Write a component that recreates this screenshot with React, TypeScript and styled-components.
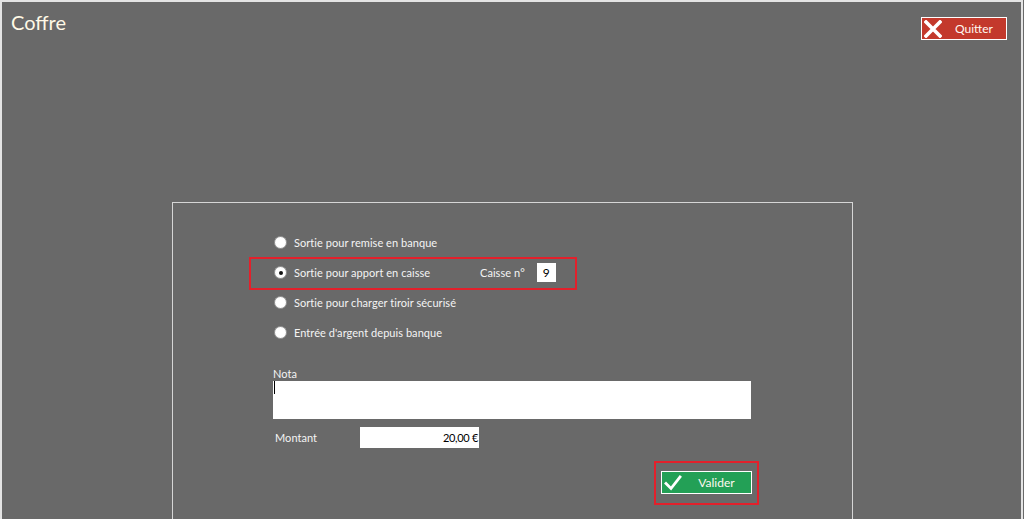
import React from "react";
import styled, { createGlobalStyle } from "styled-components";

const GlobalStyle = createGlobalStyle`
  html, body {
    margin: 0;
    padding: 0;
    background: #696969;
    overflow: hidden;
  }
  body {
    font-family: Lato, "Open Sans", "Liberation Sans", sans-serif;
  }
`;

const Window = styled.div`
  height: 519px;
  box-sizing: border-box;
  margin-right: 1px;
  background: #696969;
  border-top: 2px solid #e4e4e4;
  border-left: 2px solid #e4e4e4;
  border-right: 2px solid #e4e4e4;
  display: flex;
  flex-direction: column;
  overflow: hidden;
`;

const Header = styled.div`
  height: 200px;
  flex-shrink: 0;
  display: flex;
  justify-content: space-between;
  align-items: flex-start;
  padding: 0 14px 0 9px;
`;

const Title = styled.h1`
  margin: 8px 0 0;
  font-size: 20px;
  font-weight: 400;
  color: #fff9e6;
`;

const ActionButton = styled.button<{ $color: string; $width: number }>`
  display: flex;
  align-items: center;
  width: ${(p) => p.$width}px;
  height: 23px;
  box-sizing: border-box;
  padding: 0 0 0 2px;
  background: ${(p) => p.$color};
  border: 1px solid #ffffff;
  color: #fff8f0;
  font-family: inherit;
  font-size: 12px;
  cursor: pointer;

  span {
    flex: 1;
    text-align: center;
  }
`;

const QuitButton = styled(ActionButton)`
  margin-top: 15px;
`;

const Panel = styled.div`
  margin-left: 170px;
  width: 681px;
  flex: 1;
  box-sizing: border-box;
  border: 1px solid #d6d6d6;
  border-bottom: none;
  padding: 24px 0 0 101px;
  display: flex;
  flex-direction: column;
  color: #f4f4f4;
  font-size: 11px;
  letter-spacing: 0.05px;
`;

const RadioRow = styled.label<{ $boxed?: boolean }>`
  display: flex;
  align-items: center;
  height: 30px;
  box-sizing: border-box;
  ${(p) =>
    p.$boxed &&
    `
    height: 33px;
    width: 328px;
    margin: 0 0 -3px -25px;
    padding: 0 0 2px 23px;
    border: 2px solid #e3202b;
  `}
`;

const Radio = styled.span<{ $checked?: boolean }>`
  width: 11px;
  height: 11px;
  border-radius: 50%;
  background: radial-gradient(circle at 50% 50%, #ffffff 55%, #e6e6e6 100%);
  border: 1px solid #9a9a9a;
  margin-right: 7px;
  display: flex;
  align-items: center;
  justify-content: center;
  flex-shrink: 0;

  &::after {
    content: "";
    display: ${(p) => (p.$checked ? "block" : "none")};
    width: 4px;
    height: 4px;
    border-radius: 50%;
    background: #111;
  }
`;

const RadioText = styled.span<{ $width?: number }>`
  ${(p) => (p.$width ? `width: ${p.$width}px;` : "")}
  white-space: nowrap;
`;

const SmallInput = styled.div`
  width: 19px;
  height: 19px;
  margin-left: 12px;
  background: #fff;
  color: #000;
  font-size: 12px;
  display: flex;
  align-items: center;
  justify-content: center;
`;

const FieldLabel = styled.div`
  margin: 19px 0 0 -1px;
  height: 15px;
  line-height: 15px;
`;

const TextArea = styled.div`
  margin-left: -1px;
  width: 478px;
  height: 38px;
  background: #fff;
  position: relative;

  &::before {
    content: "";
    position: absolute;
    left: 1px;
    top: 0;
    width: 1px;
    height: 13px;
    background: #000;
  }
`;

const AmountRow = styled.div`
  display: flex;
  align-items: center;
  margin-top: 8px;
  height: 21px;
  padding-left: 1px;
`;

const AmountLabel = styled.span`
  width: 85px;
`;

const AmountInput = styled.div`
  width: 119px;
  height: 21px;
  background: #fff;
  color: #000;
  display: flex;
  align-items: center;
  justify-content: flex-end;
  box-sizing: border-box;
  padding-right: 1px;
  letter-spacing: -0.3px;
`;

const ValidateBox = styled.div`
  margin: 13px 0 0 380px;
  width: 105px;
  height: 44px;
  box-sizing: border-box;
  border: 2px solid #e3202b;
  padding: 8px 0 0 5px;
`;

function XIcon() {
  return (
    <svg width="18" height="18" viewBox="0 0 18 18">
      <path d="M2 2 L16 16 M16 2 L2 16" stroke="#fff" strokeWidth="3.6" strokeLinecap="square" />
    </svg>
  );
}

function CheckIcon() {
  return (
    <svg width="18" height="18" viewBox="0 0 18 18">
      <path d="M2 9.5 L7 14.5 L16 3" stroke="#fff" strokeWidth="2.8" fill="none" strokeLinecap="square" />
    </svg>
  );
}

export default function App() {
  return (
    <>
      <GlobalStyle />
      <Window>
        <Header>
          <Title>Coffre</Title>
          <QuitButton $color="#c3392c" $width={86}>
            <XIcon />
            <span>Quitter</span>
          </QuitButton>
        </Header>

        <Panel>
          <RadioRow>
            <Radio />
            <RadioText>Sortie pour remise en banque</RadioText>
          </RadioRow>
          <RadioRow $boxed>
            <Radio $checked />
            <RadioText $width={186}>Sortie pour apport en caisse</RadioText>
            <span>Caisse n°</span>
            <SmallInput>9</SmallInput>
          </RadioRow>
          <RadioRow>
            <Radio />
            <RadioText>Sortie pour charger tiroir sécurisé</RadioText>
          </RadioRow>
          <RadioRow>
            <Radio />
            <RadioText>Entrée d'argent depuis banque</RadioText>
          </RadioRow>

          <FieldLabel>Nota</FieldLabel>
          <TextArea />

          <AmountRow>
            <AmountLabel>Montant</AmountLabel>
            <AmountInput>20,00 €</AmountInput>
          </AmountRow>

          <ValidateBox>
            <ActionButton $color="#23a056" $width={91}>
              <CheckIcon />
              <span>Valider</span>
            </ActionButton>
          </ValidateBox>
        </Panel>
      </Window>
    </>
  );
}
